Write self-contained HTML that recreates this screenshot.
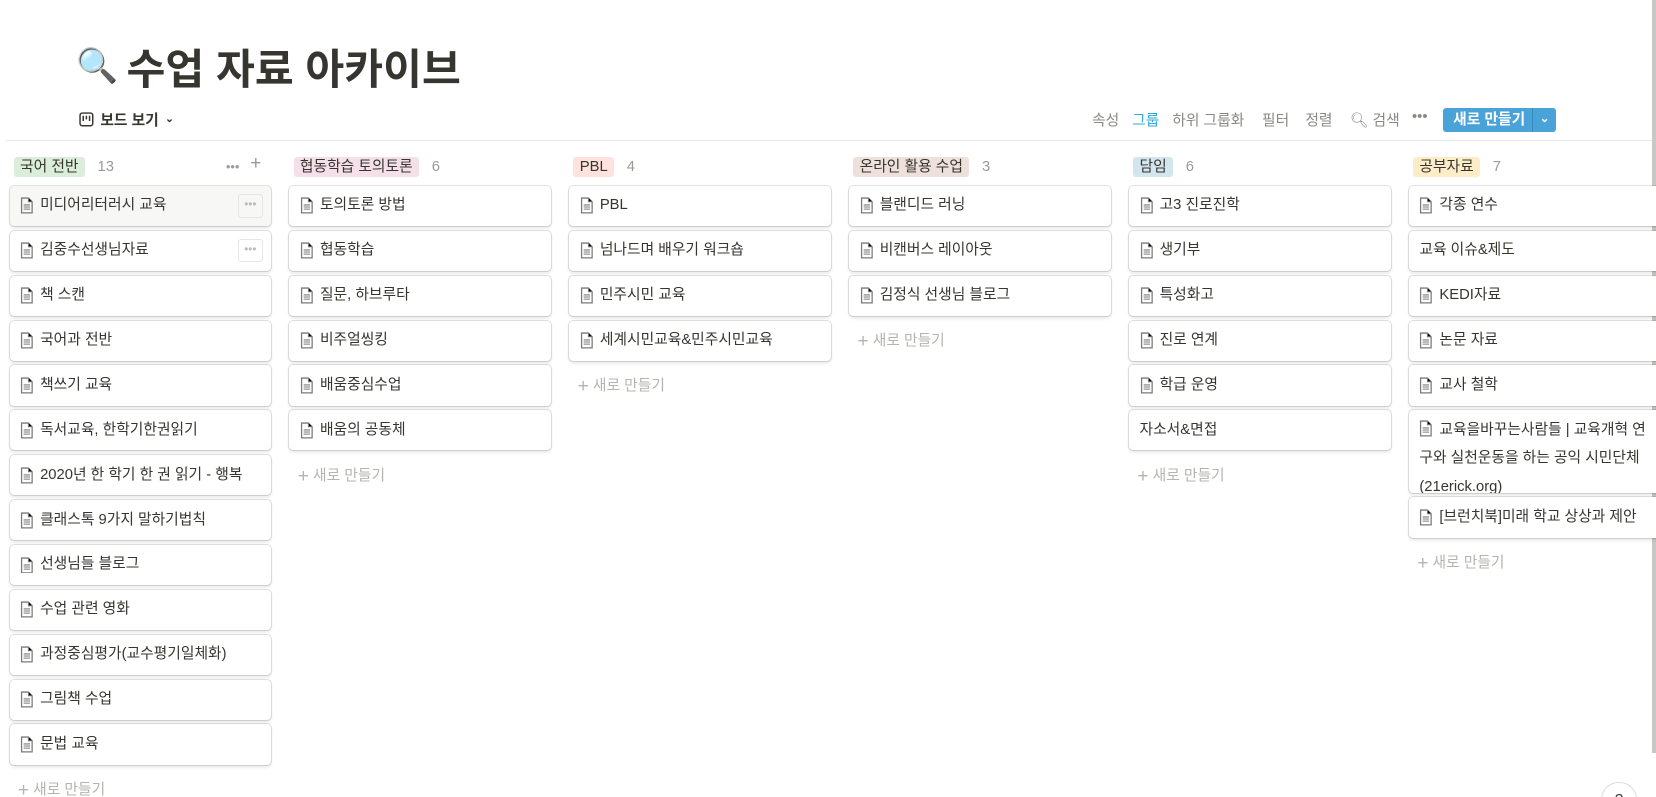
<!DOCTYPE html>
<html><head><meta charset="utf-8"><style>
*{box-sizing:border-box;margin:0;padding:0}
html,body{width:1656px;height:797px;overflow:hidden;background:#fff}
body{font-family:"Liberation Sans","Noto Sans CJK KR",sans-serif;color:#37352f;position:relative}
#w{position:absolute;left:0;top:0;width:1568px;height:755px;zoom:1.0561}
.title{position:absolute;left:72px;top:34px;font-size:40px;font-weight:700;display:flex;align-items:center;gap:8px}
.view{position:absolute;left:75px;top:103px;font-size:14px;font-weight:600;display:flex;align-items:center;gap:6px}
.tb{position:absolute;top:103px;font-size:14px;color:#8a8985}
.hr{position:absolute;left:5px;right:0;top:133px;border-top:1px solid #e9e9e7}
.col{position:absolute;top:148px;width:248px}
.hd{height:20px;display:flex;align-items:center;font-size:14px;margin-left:4px}
.tag{padding:0 6px;border-radius:3px;height:19px;line-height:19px}
.cnt{color:#9b9a97;margin-left:12px}
.card{position:absolute;left:0;width:248px;height:38px;border-radius:4px;box-shadow:0 0 0 1px rgba(15,15,15,.12),0 2px 3px rgba(15,15,15,.1);background:#fff;font-size:14px;line-height:20px;padding:0 10px;display:flex;align-items:center;gap:6px;white-space:nowrap;overflow:hidden}
.card svg{flex:none}
.new{position:absolute;left:8px;font-size:14px;color:#b4b4b0}
.more{position:absolute;right:8px;top:8px;width:24px;height:22px;border:1px solid #e6e6e4;border-radius:3px;color:#bbb;font-size:11px;text-align:center;line-height:18px}
</style></head><body>
<div id="w">
<div class="title"><span style="font-size:32px">🔍</span>수업 자료 아카이브</div>
<div class="view"><svg width="14" height="14" viewBox="0 0 14 14"><rect x="1" y="1" width="12" height="12" rx="2" fill="none" stroke="#37352f" stroke-width="1.4"/><path d="M4 3.5v5M7 3.5v3.5M10 3.5v5" stroke="#37352f" stroke-width="1.4"/></svg>보드 보기 <span style="font-size:10px">⌄</span></div>
<div class="tb" style="left:1034px">속성</div>
<div class="tb" style="left:1072px;color:#2eaadc">그룹</div>
<div class="tb" style="left:1110px">하위 그룹화</div>
<div class="tb" style="left:1195px">필터</div>
<div class="tb" style="left:1236px">정렬</div>
<div class="tb" style="left:1278px">🔍︎ 검색</div>
<div class="tb" style="left:1337px">•••</div>
<div style="position:absolute;left:1366px;top:102px;width:107px;height:23px;background:#4aa3d8;border-radius:3px;color:#fff;font-size:14px;font-weight:600;line-height:23px;padding-left:10px">새로 만들기<span style="position:absolute;left:85px;top:0;width:1px;height:23px;background:#3a8bbd"></span><span style="position:absolute;left:92px;top:-1px;font-size:11px">⌄</span></div>
<div class="hr"></div>
<div style="position:absolute;right:0;top:0;width:4px;height:713px;background:#c8c8c6"></div>
<div style="position:absolute;left:1516px;top:740px;width:34px;height:34px;border-radius:50%;border:1px solid #ddd;background:#fff;font-size:14px;text-align:center;line-height:34px">?</div>
<div id="cols"></div>
</div>
<script>
const ic='<svg width="13" height="16" viewBox="0 0 13 16"><path d="M1.5 1h6.5l3.5 3.5V15h-10z" fill="none" stroke="#7a7a78" stroke-width="1.2"/><path d="M8 1v3.5h3.5M3.5 7.5h6M3.5 9.5h6M3.5 11.5h6" stroke="#7a7a78" stroke-width="1"/></svg>';
const cols=[
["국어 전반","#dbeddb",13,["미디어리터러시 교육","김중수선생님자료","책 스캔","국어과 전반","책쓰기 교육","독서교육, 한학기한권읽기","2020년 한 학기 한 권 읽기 - 행복","클래스톡 9가지 말하기법칙","선생님들 블로그","수업 관련 영화","과정중심평가(교수평기일체화)","그림책 수업","문법 교육"]],
["협동학습 토의토론","#f5e0e9",6,["토의토론 방법","협동학습","질문, 하브루타","비주얼씽킹","배움중심수업","배움의 공동체"]],
["PBL","#ffe2dd",4,["PBL","넘나드며 배우기 워크숍","민주시민 교육","세계시민교육&민주시민교육"]],
["온라인 활용 수업","#eee0da",3,["블랜디드 러닝","비캔버스 레이아웃","김정식 선생님 블로그"]],
["담임","#d3e5ef",6,["고3 진로진학","생기부","특성화고","진로 연계","학급 운영","!자소서&면접"]],
["공부자료","#fdecc8",7,["각종 연수","!교육 이슈&제도","KEDI자료","논문 자료","교사 철학","교육을바꾸는사람들 | 교육개혁 연구와 실천운동을 하는 공익 시민단체 (21erick.org)","[브런치북]미래 학교 상상과 제안"]]];
let h='';
cols.forEach((c,i)=>{
 const x=9+i*265;
 h+=`<div class="col" style="left:${x}px"><div class="hd"><span class="tag" style="background:${c[1]}">${c[0]}</span><span class="cnt">${c[2]}</span>${i==0?'<span style="position:absolute;left:205px;color:#9b9a97;font-size:12px">•••</span><span style="position:absolute;left:228px;color:#9b9a97;font-size:18px;top:-3px">+</span>':''}</div>`;
 let y=28;
 c[3].forEach((t,j)=>{
  let noic=t[0]=='!'; if(noic)t=t.slice(1);
  let big=t.length>40;
  let hh=big?78:38;
  let extra=i==0&&j==0?'background:#f7f7f5;':'';
  if(big) h+=`<div class="card" style="top:${y}px;height:${hh}px;width:240px;white-space:normal;display:block;line-height:27px;padding-top:5px">${ic.replace('<svg','<svg style="vertical-align:-3px;margin-right:6px"')}${t}</div>`;
  else h+=`<div class="card" style="top:${y}px;${extra}${i==5?'width:240px':''}">${noic?'':ic}<span>${t}</span>${i==0&&j<2?'<span class="more">•••</span>':''}</div>`;
  y+=hh+4.5;
 });
 h+=`<div class="new" style="top:${y+8}px"><span style="font-size:18px;vertical-align:-2px">+</span> 새로 만들기</div></div>`;
});
document.getElementById('cols').innerHTML=h;
</script>
</body></html>
